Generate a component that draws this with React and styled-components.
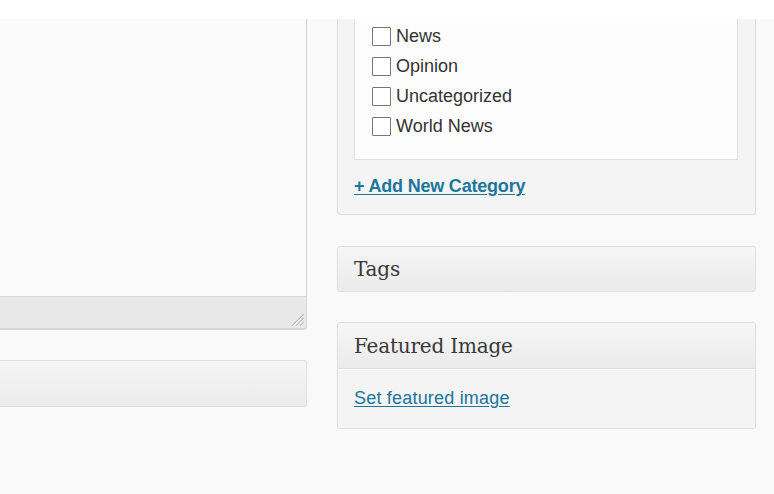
import React from 'react'
import styled, { createGlobalStyle } from 'styled-components'

const GlobalStyle = createGlobalStyle`
  html, body {
    margin: 0;
    padding: 0;
    background: #f9f9f9;
    font-family: "Liberation Sans", Arial, sans-serif;
    color: #333;
  }
`;

const categories = ['News', 'Opinion', 'Uncategorized', 'World News'];

function App() {
	return (
		<>
			<GlobalStyle />
			<TopBar />
			<Columns>
				<Main>
					<Editor>
						<EditorArea />
						<StatusBar>
							<Grip width="16" height="16" viewBox="0 0 16 16">
								<path d="M15 3 L3 15 M15 7 L7 15 M15 11 L11 15" stroke="#bdbdbd" strokeWidth="1.2" />
								<path d="M15.6 3.6 L3.6 15.6 M15.6 7.6 L7.6 15.6 M15.6 11.6 L11.6 15.6" stroke="#fff" strokeWidth="0.8" />
							</Grip>
						</StatusBar>
					</Editor>
					<EmptyBox />
				</Main>

				<Side>
					<CategoryBox>
						<CategoryList>
							{categories.map((name) => (
								<CategoryRow key={name}>
									<Check type="checkbox" />
									<span>{name}</span>
								</CategoryRow>
							))}
						</CategoryList>
						<AddLink href="#">+ Add New Category</AddLink>
					</CategoryBox>

					<PostBox>
						<BoxTitle>Tags</BoxTitle>
					</PostBox>

					<PostBox>
						<BoxTitle $divided>Featured Image</BoxTitle>
						<BoxBody>
							<PlainLink href="#">Set featured image</PlainLink>
						</BoxBody>
					</PostBox>
				</Side>
			</Columns>
		</>
	)
}

export default App


const TopBar = styled.div`
  height: 19px;
  background: #fff;
`;

const Columns = styled.div`
  display: flex;
  align-items: flex-start;
  gap: 30px;
  padding-right: 18px;
`;

const Main = styled.div`
  width: 307px;
  display: flex;
  flex-direction: column;
  gap: 30px;
`;

const Editor = styled.div`
  border-right: 1px solid #d4d4d4;
  border-bottom-right-radius: 3px;
  background: #fbfbfb;
`;

const EditorArea = styled.div`
  height: 277px;
`;

const StatusBar = styled.div`
  position: relative;
  height: 31px;
  background: #e8e8e8;
  border-top: 1px solid #dadada;
  border-bottom: 2px solid #d6d6d6;
  border-bottom-right-radius: 3px;
`;

const Grip = styled.svg`
  position: absolute;
  right: 1px;
  bottom: 1px;
`;

const EmptyBox = styled.div`
  height: 45px;
  border: 1px solid #dfdfdf;
  border-left: none;
  border-radius: 0 3px 3px 0;
  background: linear-gradient(to bottom, #f5f5f5, #ececec);
`;

const Side = styled.div`
  flex: 1;
  display: flex;
  flex-direction: column;
  gap: 30px;
`;

const CategoryBox = styled.div`
  background: #f4f4f4;
  border: 1px solid #dfdfdf;
  border-top: none;
  border-radius: 0 0 3px 3px;
  padding: 0 17px 18px 16px;
  margin-bottom: 1px;
`;

const CategoryList = styled.div`
  background: #fdfdfd;
  border: 1px solid #dfdfdf;
  border-top: none;
  padding: 2px 17px 18px;
`;

const CategoryRow = styled.label`
  display: flex;
  align-items: center;
  gap: 5px;
  height: 30px;
  font-size: 18px;
  color: #333;
`;

const Check = styled.input`
  appearance: none;
  margin: 0;
  width: 19px;
  height: 19px;
  border: 1.5px solid #767676;
  border-radius: 1px;
  background: #fff;
  box-sizing: border-box;
`;

const AddLink = styled.a`
  display: block;
  width: fit-content;
  margin-top: 16px;
  line-height: 20px;
  font-size: 18px;
  font-weight: bold;
  letter-spacing: -0.2px;
  color: #21759b;
  text-decoration: underline;
  text-underline-offset: 2px;
`;

const PostBox = styled.div`
  background: #f4f4f4;
  border: 1px solid #dfdfdf;
  border-radius: 3px;
  box-shadow: inset 0 1px 0 #fff;
`;

const BoxTitle = styled.h3`
  margin: 0;
  height: ${(p) => (p.$divided ? '45px' : '44px')};
  line-height: ${(p) => (p.$divided ? '46px' : '44px')};
  padding-left: 16px;
  font-family: "DejaVu Serif", Georgia, serif;
  font-weight: normal;
  font-size: 20px;
  letter-spacing: -0.2px;
  color: #383838;
  background: linear-gradient(to bottom, #f6f6f6, #ebebeb);
  border-radius: 3px 3px 0 0;
  border-bottom: ${(p) => (p.$divided ? '1px solid #dfdfdf' : 'none')};
`;

const BoxBody = styled.div`
  padding: 19px 16px 20px;
  background: #f4f4f4;
  border-radius: 0 0 3px 3px;
  box-shadow: inset 0 1px 0 #fff;
`;

const PlainLink = styled.a`
  display: block;
  width: fit-content;
  line-height: 20px;
  font-size: 18px;
  letter-spacing: 0.2px;
  color: #21759b;
  text-decoration: underline;
  text-underline-offset: 2px;
`;
